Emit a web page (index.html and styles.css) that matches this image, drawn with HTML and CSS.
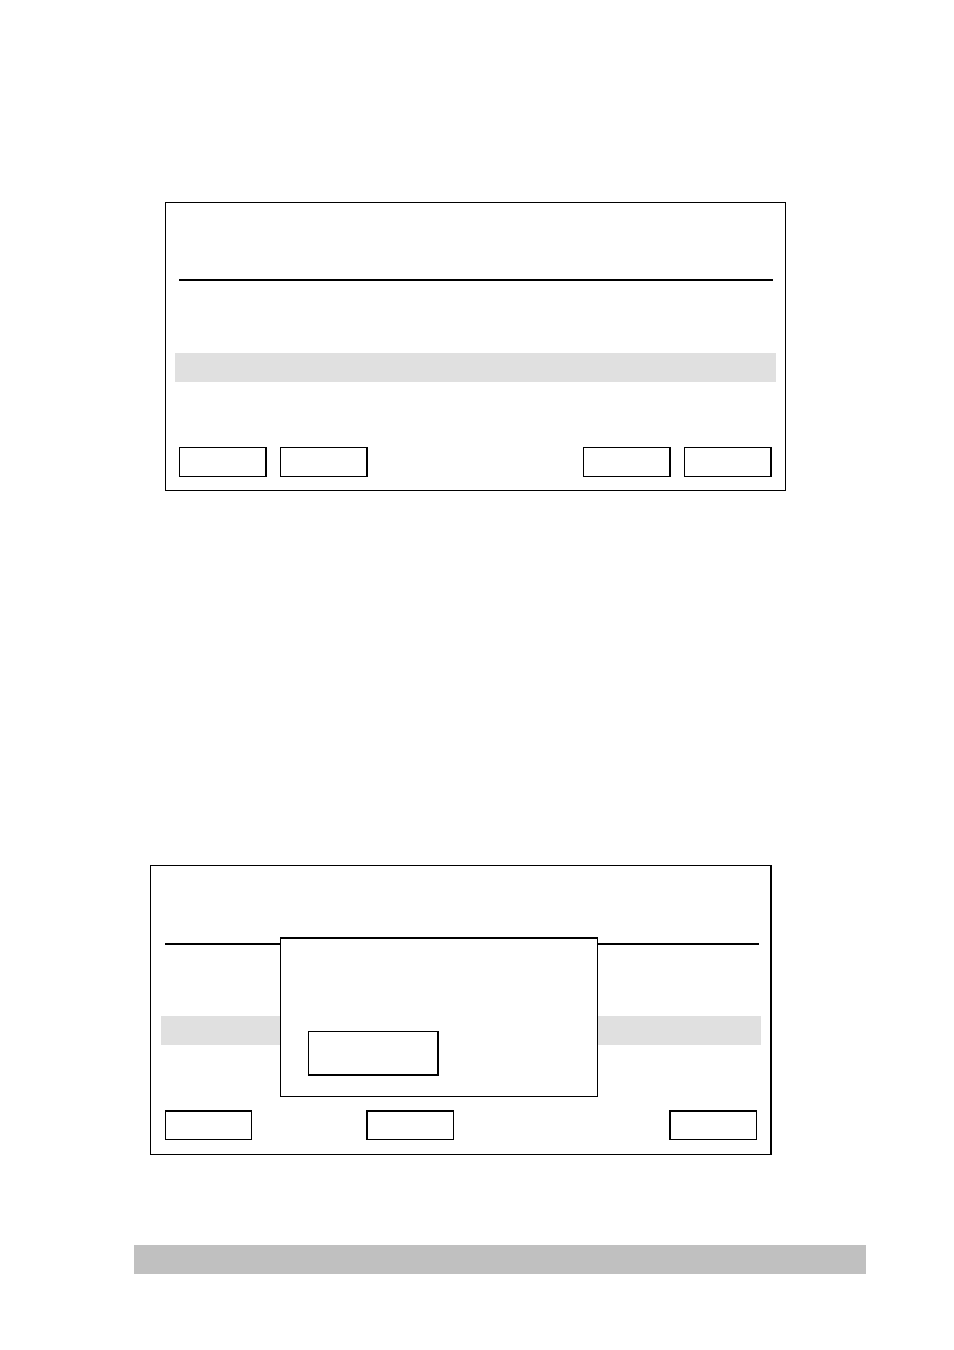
FILE: index.html
```
<!DOCTYPE html>
<html lang="en">
<head>
<meta charset="utf-8">
<title>Display panels</title>
<link rel="stylesheet" href="styles.css">
</head>
<body>
<main class="page">
  <section class="panel panel-main" aria-label="Display">
    <header class="panel-header"></header>
    <hr class="rule">
    <div class="panel-body"></div>
    <div class="highlight"></div>
    <div class="soft-keys">
      <button class="key" type="button" aria-label="Key 1"></button>
      <button class="key" type="button" aria-label="Key 2"></button>
      <button class="key key-fifth" type="button" aria-label="Key 5"></button>
      <button class="key" type="button" aria-label="Key 6"></button>
    </div>
  </section>

  <section class="panel panel-prompt" aria-label="Display with prompt">
    <header class="panel-header"></header>
    <hr class="rule">
    <div class="panel-body"></div>
    <div class="highlight"></div>
    <div class="soft-keys">
      <button class="key key-first" type="button" aria-label="Key 1"></button>
      <button class="key key-third" type="button" aria-label="Key 3"></button>
      <button class="key key-sixth" type="button" aria-label="Key 6"></button>
    </div>
    <div class="dialog" role="dialog" aria-label="Prompt">
      <button class="dialog-button" type="button" aria-label="Confirm"></button>
    </div>
  </section>

  <footer class="footer"></footer>
</main>
</body>
</html>
```
FILE: styles.css
```
* {
  box-sizing: border-box;
}

body {
  margin: 0;
  background: #fff;
  font-family: "Liberation Sans", Arial, sans-serif;
}

.page {
  padding: 202px 88px 76px 134px;
}

.panel {
  position: relative;
  border: 1px solid #000;
}

.panel-main {
  margin: 0 80px 374px 31px;
  padding-bottom: 13px;
}

.panel-prompt {
  margin: 0 94px 90px 16px;
  padding-bottom: 14px;
  border-right-width: 2px;
}

.panel-header {
  min-height: 76px;
}

.panel-prompt .panel-header {
  min-height: 77px;
}

.rule {
  height: 2px;
  margin: 0 12px 0 13px;
  border: 0;
  background: #000;
}

.panel-prompt .rule {
  margin: 0 11px 0 14px;
}

.panel-body {
  min-height: 72px;
}

.panel-prompt .panel-body {
  min-height: 71px;
}

.highlight {
  min-height: 29px;
  margin: 0 9px 65px;
  background: #e0e0e0;
}

.panel-prompt .highlight {
  margin-left: 10px;
}

.soft-keys {
  display: grid;
  grid-template-columns: repeat(6, 1fr);
  gap: 13px;
  margin: 0 13px;
}

.key,
.dialog-button {
  padding: 0;
  border: 1px solid #000;
  border-right-width: 2px;
  border-radius: 0;
  background: #fff;
}

.key {
  height: 30px;
}

.panel-prompt .key {
  border-width: 2px 1px 1px 2px;
}

.panel-prompt .key-first {
  border-left-width: 1px;
  margin-left: 1px;
}

.key-third {
  grid-column: 3;
}

.key-fifth {
  grid-column: 5;
}

.key-sixth {
  grid-column: 6;
}

.dialog {
  position: absolute;
  top: 71px;
  left: 129px;
  right: 172px;
  padding: 92px 158px 20px 27px;
  border: 1px solid #000;
  border-top-width: 2px;
  background: #fff;
}

.dialog-button {
  display: block;
  width: 100%;
  height: 45px;
  border-bottom-width: 2px;
}

.footer {
  min-height: 29px;
  background: #c0c0c0;
}
```
